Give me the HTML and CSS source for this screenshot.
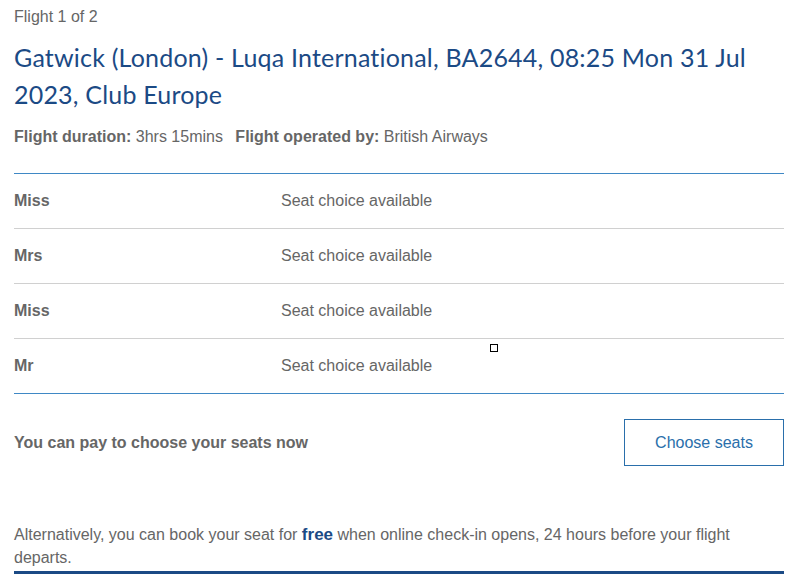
FILE: index.html
```html
<!DOCTYPE html>
<html lang="en">
<head>
<meta charset="utf-8">
<title>Seat selection</title>
<link rel="stylesheet" href="styles.css">
</head>
<body>
<div class="page">
  <p class="step">Flight 1 of 2</p>
  <h1 class="title">Gatwick (London) - Luqa International, BA2644, 08:25 Mon 31 Jul 2023, Club Europe</h1>
  <p class="meta"><b>Flight duration:</b> 3hrs 15mins <span class="gap"></span><b>Flight operated by:</b> British Airways</p>

  <div class="passengers">
    <div class="row"><span class="name">Miss</span><span class="status">Seat choice available</span></div>
    <div class="row"><span class="name">Mrs</span><span class="status">Seat choice available</span></div>
    <div class="row"><span class="name">Miss</span><span class="status">Seat choice available</span></div>
    <div class="row"><span class="name">Mr</span><span class="status">Seat choice available</span></div>
    <span class="marker"></span>
  </div>

  <div class="pay">
    <span class="pay-text">You can pay to choose your seats now</span>
    <button class="choose">Choose seats</button>
  </div>

  <p class="alt">Alternatively, you can book your seat for <b class="free">free</b> when online check-in opens, 24 hours before your flight departs.</p>
</div>
</body>
</html>
```

FILE: styles.css
```css
html, body {
  margin: 0;
  padding: 0;
  background: #fff;
}

body {
  font-family: "Liberation Sans", Arial, sans-serif;
  font-size: 16px;
  color: #666;
}

.page {
  position: relative;
  padding: 0 11px 0 14px;
}

.step {
  margin: 0;
  padding-top: 8px;
  line-height: 18px;
}

.title {
  margin: 13px 0 0;
  font-family: "Lato", "Open Sans", sans-serif;
  font-weight: 400;
  font-size: 25px;
  line-height: 37px;
  color: #1b4a85;
  font-variant-ligatures: none;
  letter-spacing: 0.2px;
}

.meta {
  margin: 15px 0 0;
  line-height: 18px;
}

.meta b {
  font-weight: 700;
}

.gap {
  display: inline-block;
  width: 8px;
}

.passengers {
  position: relative;
  margin-top: 27px;
  border-top: 1px solid #3f88c5;
  border-bottom: 1px solid #3f88c5;
}

.row {
  display: flex;
  align-items: center;
  height: 54px;
  border-top: 1px solid #d0d0d0;
}

.row:first-child {
  border-top: none;
}

.name {
  width: 267px;
  font-weight: 700;
}

.marker {
  position: absolute;
  left: 476px;
  top: 170px;
  width: 6px;
  height: 6px;
  border: 1px solid #000;
}

.pay {
  display: flex;
  justify-content: space-between;
  align-items: center;
  margin-top: 25px;
}

.pay-text {
  font-weight: 700;
}

.choose {
  width: 160px;
  height: 47px;
  background: #fff;
  border: 1px solid #2a6fab;
  color: #2a6fab;
  font-family: "Liberation Sans", Arial, sans-serif;
  font-size: 16px;
  padding: 0;
}

.alt {
  margin: 57px 0 0;
  line-height: 23px;
  padding-bottom: 2px;
  border-bottom: 3px solid #1b4a85;
}

.free {
  color: #1b4a85;
  font-size: 17px;
  line-height: 18px;
}
```
